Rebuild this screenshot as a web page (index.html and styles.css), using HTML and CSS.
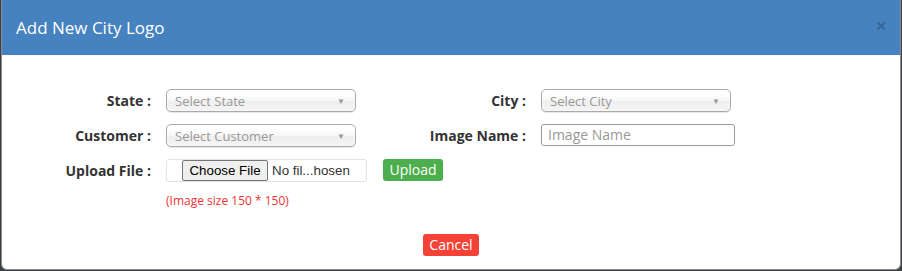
FILE: index.html
```html
<!DOCTYPE html>
<html>
<head>
<meta charset="utf-8">
<link rel="stylesheet" href="styles.css">
</head>
<body>
<div class="modal">
  <div class="modal-header">
    <h4 class="modal-title">Add New City Logo</h4>
    <span class="close">&times;</span>
  </div>
  <div class="modal-body">
    <div class="form-grid">
      <label class="lbl">State :</label>
      <div class="chosen"><span>Select State</span><span class="arrow">&#9660;</span></div>
      <label class="lbl">City :</label>
      <div class="chosen"><span>Select City</span><span class="arrow">&#9660;</span></div>

      <label class="lbl">Customer :</label>
      <div class="chosen"><span>Select Customer</span><span class="arrow">&#9660;</span></div>
      <label class="lbl">Image Name :</label>
      <input class="text-input" type="text" placeholder="Image Name">

      <label class="lbl">Upload File :</label>
      <div class="upload-row">
        <label class="file-input"><span class="file-btn">Choose File</span><span class="file-name">No fil...hosen</span></label>
        <button class="btn btn-upload">Upload</button>
      </div>

      <div class="hint">(Image size 150 * 150)</div>
    </div>
    <div class="footer">
      <button class="btn btn-cancel">Cancel</button>
    </div>
  </div>
</div>
</body>
</html>
```
FILE: styles.css
```css
html, body {
  margin: 0;
  padding: 0;
  height: 100%;
}
body {
  background: #3b3f44;
  font-family: "Open Sans", "Liberation Sans", sans-serif;
  overflow: hidden;
}
.modal {
  margin: -6px 1px 0 1px;
  height: 276px;
  box-sizing: border-box;
  background: #fff;
  border: 1px solid #8a8a8a;
  border-top: none;
  border-radius: 6px;
  overflow: hidden;
}
.modal-header {
  background: #4682c0;
  height: 61px;
  box-sizing: border-box;
  padding: 6px 13px 0 14px;
  display: flex;
  align-items: center;
  justify-content: space-between;
}
.modal-title {
  margin: 0;
  color: #fff;
  font-weight: 400;
  font-size: 17px;
}
.close {
  color: #000;
  opacity: 0.2;
  font-size: 20px;
  font-weight: 700;
  line-height: 1;
  margin-top: -4px;
}
.modal-body {
  padding: 34px 0 0 0;
}
.form-grid {
  display: grid;
  grid-template-columns: 149px 190px 155px 194px;
  column-gap: 15px;
  row-gap: 12px;
  align-items: center;
}
.lbl {
  text-align: right;
  font-weight: 700;
  font-size: 14px;
  color: #333;
}
.chosen {
  width: 190px;
  height: 23px;
  box-sizing: border-box;
  border: 1px solid #aaa;
  border-radius: 5px;
  background: linear-gradient(#ffffff 20%, #f6f6f6 50%, #eeeeee 52%, #f4f4f4 100%);
  box-shadow: inset 0 0 3px #fff, 0 1px 1px rgba(0,0,0,0.1);
  display: flex;
  align-items: center;
  justify-content: space-between;
  padding: 0 10px 0 8px;
  font-size: 13px;
  color: #999;
}
.arrow {
  font-size: 8px;
  color: #999;
}
.text-input {
  height: 22px;
  box-sizing: border-box;
  border: 1px solid #9a9a9a;
  border-radius: 3px;
  padding: 0 6px;
  font-family: "Open Sans", "Liberation Sans", sans-serif;
  font-size: 14px;
  color: #555;
  margin-top: -2px;
}
.text-input::placeholder {
  color: #999;
}
.upload-row {
  grid-column: 2 / span 3;
  display: flex;
  align-items: center;
  gap: 16px;
  height: 23px;
}
.file-input {
  width: 201px;
  height: 23px;
  box-sizing: border-box;
  border: 1px solid #e2e2e2;
  border-radius: 3px;
  padding: 0 0 0 15px;
  display: flex;
  align-items: center;
  font-family: "Liberation Sans", Arial, sans-serif;
  font-size: 13.33px;
  color: #333;
  white-space: nowrap;
}
.file-btn {
  display: inline-block;
  box-sizing: border-box;
  width: 86px;
  height: 21px;
  line-height: 19px;
  text-align: center;
  background: #efefef;
  border: 1px solid #767676;
  border-radius: 2px;
  color: #000;
}
.file-name {
  margin-left: 4px;
}
.btn {
  border: none;
  color: #fff;
  font-family: "Open Sans", "Liberation Sans", sans-serif;
  font-size: 14px;
  border-radius: 3px;
  padding: 0;
  height: 22px;
  line-height: 22px;
  cursor: pointer;
}
.btn-upload {
  background: #4cae4c;
  width: 60px;
  margin-top: -1px;
}
.hint {
  grid-column: 2 / span 3;
  color: #f03333;
  font-size: 12px;
  margin-top: -2px;
}
.footer {
  display: flex;
  justify-content: center;
  padding-top: 25px;
}
.btn-cancel {
  background: #f44336;
  width: 56px;
}
```
